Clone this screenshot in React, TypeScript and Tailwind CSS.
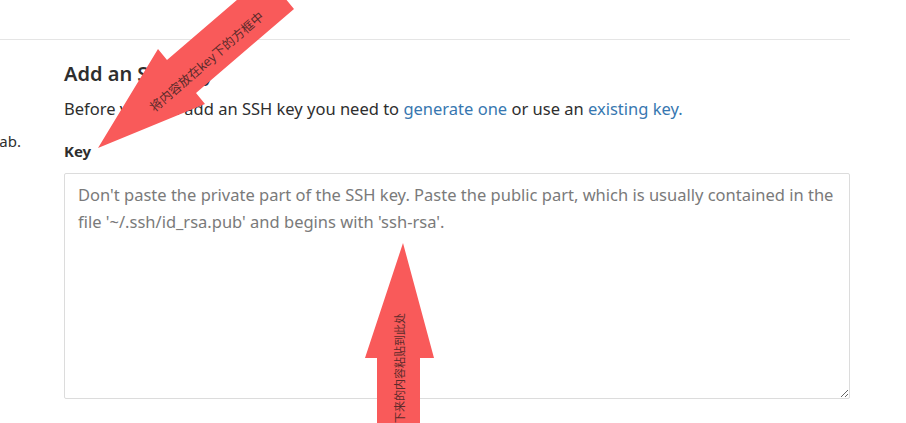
import React from "react";

const Arrow1 = () => (
  <svg className="absolute left-0 top-0" width="906" height="423" viewBox="0 0 906 423">
    <polygon
      points="98,148 158,49 167,60 266,-25 294,9 196,93 205,104"
      fill="#f95a5a"
    />
    <text
      x="0"
      y="0"
      fontSize="12.5"
      fill="#5b2b2b"
      textAnchor="middle"
      dominantBaseline="central"
      transform="translate(206 61) rotate(-40.6)"
      fontFamily="'Noto Sans CJK SC', sans-serif"
    >
      将内容放在key下的方框中
    </text>
  </svg>
);

const Arrow2 = () => (
  <svg className="absolute left-0 top-0" width="906" height="423" viewBox="0 0 906 423">
    <polygon
      points="403,243 434,358 420,358 420,430 377,430 377,358 365,358"
      fill="#f95a5a"
    />
    <text
      x="0"
      y="0"
      fontSize="11"
      fill="#5b2b2b"
      textAnchor="end"
      dominantBaseline="central"
      transform="translate(399 313) rotate(-90)"
      fontFamily="'Noto Sans CJK SC', sans-serif"
    >
      将复制下来的内容粘贴到此处
    </text>
  </svg>
);

export default function App() {
  return (
    <div className="relative w-[906px] h-[423px] overflow-hidden bg-white font-['Noto_Sans','Open_Sans',sans-serif] text-[#2e2e2e]">
      <div className="h-[40px] w-[850px] border-b border-[#e5e5e5]" />
      <div className="flex">
        {/* left column, mostly scrolled out of view */}
        <div className="w-[64px] overflow-hidden pt-[90px]">
          <div className="flex justify-end w-[21px]">
            <p className="text-[15px] leading-[22px] whitespace-nowrap">
              Add an SSH key to your account on GitLab.
            </p>
          </div>
        </div>
        <div className="w-[786px] pt-[20px]">
          <h4 className="text-[20px] leading-[28px] font-semibold">Add an SSH key</h4>
          <p className="mt-[9px] text-[16.5px] leading-[24px]">
            Before you can add an SSH key you need to{" "}
            <a className="text-[#3777b0]">generate one</a> or use an{" "}
            <a className="text-[#3777b0]">existing key.</a>
          </p>
          <label className="block mt-[19px] text-[15px] leading-[22px] font-bold">Key</label>
          <textarea
            className="block mt-[11px] w-[786px] h-[226px] border border-[#dcdcdc] rounded-[2px] px-[13px] py-[7px] text-[16.5px] leading-[27px] text-[#555] placeholder:text-[#7a7a7a] outline-none"
            placeholder="Don't paste the private part of the SSH key. Paste the public part, which is usually contained in the file '~/.ssh/id_rsa.pub' and begins with 'ssh-rsa'."
          />
          <label className="block mt-[19px] ml-[20px] text-[15px] leading-[22px] font-bold">Title</label>
        </div>
      </div>
      <Arrow1 />
      <Arrow2 />
    </div>
  );
}
